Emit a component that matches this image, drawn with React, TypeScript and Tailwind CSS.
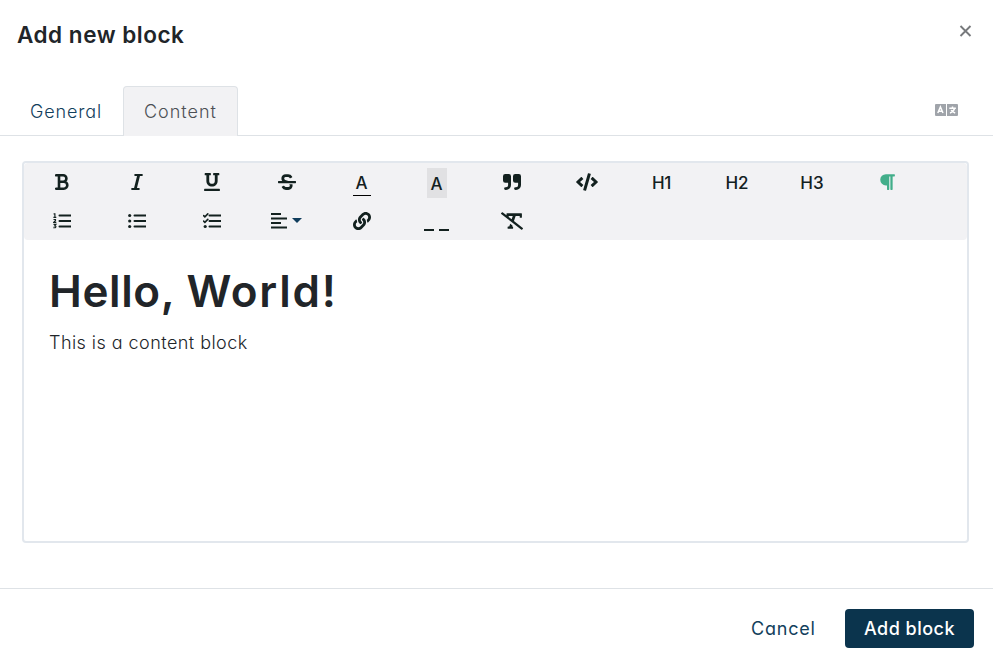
import type { ReactNode } from 'react';
import {
  FaUnderline,
  FaStrikethrough,
  FaCode,
  FaParagraph,
  FaLink,
  FaRemoveFormat,
} from 'react-icons/fa';

function Tool({ children }: { children: ReactNode }) {
  return (
    <button className="flex h-[38.5px] w-[75px] items-center justify-center">{children}</button>
  );
}

function Bold() {
  return (
    <svg className="ml-px" width="14" height="16" viewBox="0 0 14 16" fill="none">
      <path d="M1.2 1.3h7a3.2 3.2 0 0 1 0 6.4H4M8.2 7.7h.6a3.5 3.5 0 0 1 0 7H1.2M4 1.3v13.4" stroke="currentColor" strokeWidth="2.6" strokeLinecap="round" />
    </svg>
  );
}

function Italic() {
  return (
    <svg width="12" height="16" viewBox="0 0 12 16" fill="none">
      <path d="M4.2 1.1h6.7M1.1 14.9h6.7" stroke="currentColor" strokeWidth="2" strokeLinecap="round" />
      <path d="M7.7 1.1 4.3 14.9" stroke="currentColor" strokeWidth="2.8" />
    </svg>
  );
}

function Quote() {
  return (
    <svg width="18" height="16" viewBox="0 0 18 16" fill="currentColor">
      <path d="M2.2 0h3.6A2.2 2.2 0 0 1 8 2.2V11a5 5 0 0 1-5 5h-.5a1.4 1.4 0 0 1 0-2.8H3A2.1 2.1 0 0 0 5.1 11V8.7H2.2A2.2 2.2 0 0 1 0 6.5V2.2A2.2 2.2 0 0 1 2.2 0Z" />
      <path d="M12.2 0h3.6A2.2 2.2 0 0 1 18 2.2V11a5 5 0 0 1-5 5h-.5a1.4 1.4 0 0 1 0-2.8h.5a2.1 2.1 0 0 0 2.1-2.2V8.7h-2.9A2.2 2.2 0 0 1 10 6.5V2.2A2.2 2.2 0 0 1 12.2 0Z" />
    </svg>
  );
}

function Lines() {
  return <path d="M6.5 2.5h11M6.5 8h11M6.5 13.5h11" stroke="currentColor" strokeWidth="2" strokeLinecap="round" />;
}

function OrderedList() {
  return (
    <svg width="18" height="16" viewBox="0 0 18 16" fill="none">
      <Lines />
      <path d="M.6 .9h1.3v3.4M.4 4.4h2.9M.5 6.5h2v1L.8 9.3h2.5M.5 11.3h2.4L1.7 12.8c2 0 1.5 2.4-1.4 1.9" stroke="currentColor" strokeWidth="1.15" />
    </svg>
  );
}

function BulletList() {
  return (
    <svg width="18" height="16" viewBox="0 0 18 16" fill="none">
      <Lines />
      <g fill="currentColor">
        <circle cx="1.7" cy="2.5" r="1.6" />
        <circle cx="1.7" cy="8" r="1.6" />
        <circle cx="1.7" cy="13.5" r="1.6" />
      </g>
    </svg>
  );
}

function CheckList() {
  return (
    <svg width="18" height="16" viewBox="0 0 18 16" fill="none">
      <Lines />
      <path d="M.6 2.6l1.3 1.2L4.8.9M.6 8.1l1.3 1.2 2.9-2.9" stroke="currentColor" strokeWidth="1.6" strokeLinecap="round" />
      <circle cx="2.2" cy="13.5" r="1.6" fill="currentColor" />
    </svg>
  );
}

function AlignLeft() {
  return (
    <svg width="16" height="16" viewBox="0 0 16 16" fill="none">
      <path d="M0 1h10M0 5.5h16M0 10h10M0 14.5h16" stroke="currentColor" strokeWidth="2" />
    </svg>
  );
}

function Translate() {
  return (
    <svg width="23" height="12" viewBox="0 0 23 12" fill="none">
      <path d="M1 0h10v12H1a1 1 0 0 1-1-1V1a1 1 0 0 1 1-1ZM12 0h10a1 1 0 0 1 1 1v10a1 1 0 0 1-1 1H12Z" fill="#a0a4aa" />
      <path d="M2.8 9 5.4 3 8 9M3.7 7.3h3.4M14.3 4.2h6.6M17.5 2.6v1.4M19.6 4.4c-.7 2.5-2.3 3.9-4.6 4.6M16.2 6c.7 1.6 1.9 2.4 4 3" stroke="white" strokeWidth="1.5" />
    </svg>
  );
}

export default function App() {
  return (
    <div className="flex h-[666px] w-[993px] flex-col overflow-hidden bg-white font-['Inter',sans-serif] text-[#212529] [font-feature-settings:'cv11']">
      <header className="flex h-[86px] shrink-0 justify-between pl-[17px] pr-[21px]">
        <h1 className="mt-[19px] h-8 whitespace-nowrap text-[22.5px] font-semibold leading-8 tracking-[0.52px]">Add new block</h1>
        <button className="mt-[25px] h-3 w-[13px] text-[#77797c]">
          <svg width="13" height="12" viewBox="0 0 13 12" fill="none">
            <path d="M1.5 1l10 10M11.5 1l-10 10" stroke="currentColor" strokeWidth="1.9" />
          </svg>
        </button>
      </header>
      <nav className="flex h-[50px] shrink-0 border-b border-[#dee2e6] pr-[35px] text-[18px] font-light">
        <button className="h-[50px] w-[123px] pl-[30px] text-left tracking-[0.85px] text-[#12405c]">General</button>
        <button className="h-[50px] w-[115px] rounded-t border border-b-0 border-[#dee2e6] bg-[#f2f2f4] pl-5 text-left tracking-[1px] text-[#4c5055]">Content</button>
        <button className="mb-[2px] ml-auto"><Translate /></button>
      </nav>
      <main className="ml-[22px] mt-[25px] flex h-[382px] w-[947px] shrink-0 flex-col rounded border-2 border-[#e2e7ed]">
        <div className="flex h-[77px] shrink-0 flex-wrap content-start rounded bg-[#f2f2f4] text-[17px] font-medium text-[#13211f]">
          <Tool><Bold /></Tool>
          <Tool><Italic /></Tool>
          <Tool><FaUnderline size={18} /></Tool>
          <Tool><FaStrikethrough size={18} /></Tool>
          <Tool><span className="mt-px h-[27px] w-[18px] border-b border-black leading-[28px]">A</span></Tool>
          <Tool><span className="mt-px h-[30px] w-5 bg-[#e1e1e3] leading-[33px]">A</span></Tool>
          <Tool><Quote /></Tool>
          <Tool><FaCode size={22} /></Tool>
          <Tool><span className="mt-[3px] tracking-[-0.4px]">H1</span></Tool>
          <Tool><span className="ml-px mt-[3px]">H2</span></Tool>
          <Tool><span className="ml-px mt-[3px]">H3</span></Tool>
          <Tool><FaParagraph size={18} className="text-[#42ae8a]" /></Tool>
          <Tool><OrderedList /></Tool>
          <Tool><BulletList /></Tool>
          <Tool><CheckList /></Tool>
          <Tool>
            <AlignLeft />
            <svg className="ml-[5px]" width="10" height="5" viewBox="0 0 10 5"><path d="M0 0h10L5 5Z" fill="#103d5c" /></svg>
          </Tool>
          <Tool><FaLink size={18} /></Tool>
          <Tool>
            <span className="mt-[18px] flex gap-[5px]"><i className="h-[2px] w-[10px] bg-current" /><i className="h-[2px] w-[10px] bg-current" /></span>
          </Tool>
          <Tool><FaRemoveFormat size={22} /></Tool>
        </div>
        <article className="px-[25px] pt-[22px]">
          <h2 className="h-[58px] whitespace-nowrap text-[44px] font-semibold leading-[58px]">
            <span className="tracking-[0.6px]">Hello,</span>{' '}
            <span className="tracking-[1.75px]">World!</span>
          </h2>
          <p className="mt-[11px] h-6 whitespace-nowrap text-[18px] font-light leading-6 tracking-[0.45px]">This is a content block</p>
        </article>
      </main>
      <footer className="mt-[45px] flex h-[78px] shrink-0 items-center justify-end border-t border-[#dee2e6] pr-[19px] pt-px text-[18px]">
        <button className="w-[94px] text-left tracking-[0.8px] text-[#12405c]">Cancel</button>
        <button className="h-[39px] w-[129px] rounded bg-[#0b344d] font-medium tracking-[0.5px] text-white">Add block</button>
      </footer>
    </div>
  );
}
